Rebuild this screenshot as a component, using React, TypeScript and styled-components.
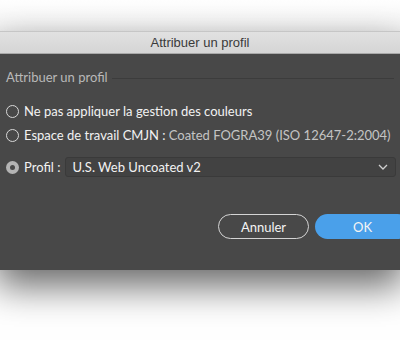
import React from "react";
import styled, { createGlobalStyle } from "styled-components";

const GlobalStyle = createGlobalStyle`
  html, body {
    margin: 0;
    padding: 0;
    background: #ffffff;
    overflow: hidden;
  }
  body {
    width: 400px;
    height: 350px;
  }
`;

const Page = styled.div`
  width: 400px;
  height: 350px;
  display: flex;
  flex-direction: column;
  background: linear-gradient(#ffffff 0px, #f4f4f4 31px, #ffffff 31px);
  overflow: hidden;
`;

const Dialog = styled.div`
  margin-top: 31px;
  margin-left: -4px;
  width: 408px;
  display: flex;
  flex-direction: column;
  box-shadow: 0 16px 36px rgba(0, 0, 0, 0.6);
`;

const TitleBar = styled.div`
  height: 21px;
  border-top: 1px solid #c6c6c6;
  border-bottom: 1px solid #a9a9a9;
  background: linear-gradient(#e1e1e1, #d5d5d5);
  display: flex;
  align-items: center;
  justify-content: center;
  font-family: "Liberation Sans", Arial, sans-serif;
  font-size: 13px;
  color: #3a3a3a;
`;

const Body = styled.div`
  height: 216px;
  box-sizing: border-box;
  background: #484848;
  padding: 15px 10px 0 10px;
  display: flex;
  flex-direction: column;
  font-family: Lato, "Open Sans", sans-serif;
  font-size: 13px;
`;

const GroupHeader = styled.div`
  display: flex;
  align-items: center;
  gap: 4px;
  color: #b9b9b9;
  font-size: 13px;
  height: 16px;
`;

const GroupLine = styled.div`
  flex: 1;
  height: 1px;
  background: #3c3c3c;
  margin-top: 2px;
`;

const Options = styled.div`
  display: flex;
  flex-direction: column;
  margin-top: 14px;
`;

const Row = styled.div<{ $h: number }>`
  display: flex;
  align-items: center;
  height: ${(p) => p.$h}px;
  gap: 5px;
  color: #f2f2f2;
`;

const Radio = styled.span<{ $checked?: boolean }>`
  width: 13px;
  height: 13px;
  box-sizing: border-box;
  border-radius: 50%;
  flex-shrink: 0;
  border: ${(p) => (p.$checked ? "none" : "1px solid #d8d8d8")};
  background: ${(p) => (p.$checked ? "#b4b4b4" : "transparent")};
  display: flex;
  align-items: center;
  justify-content: center;
  &::after {
    content: "";
    display: ${(p) => (p.$checked ? "block" : "none")};
    width: 5px;
    height: 5px;
    border-radius: 50%;
    background: #4a4a4a;
  }
`;

const Label = styled.span`
  white-space: nowrap;
`;

const Muted = styled.span`
  color: #c4c4c4;
  white-space: nowrap;
`;

const Select = styled.div`
  flex: 1;
  height: 20px;
  margin-right: -2px;
  box-sizing: border-box;
  border: 1px solid #3a3a3a;
  border-radius: 3px;
  background: #424242;
  display: flex;
  align-items: center;
  justify-content: space-between;
  padding: 0 7px 0 6px;
  color: #f2f2f2;
`;

const Buttons = styled.div`
  display: flex;
  justify-content: flex-end;
  gap: 6px;
  margin-top: 27px;
  margin-right: -16px;
`;

const Button = styled.div<{ $primary?: boolean }>`
  width: ${(p) => (p.$primary ? "95px" : "91px")};
  height: 25px;
  box-sizing: border-box;
  border-radius: 13px;
  display: flex;
  align-items: center;
  justify-content: center;
  color: #f4f4f4;
  font-size: 13px;
  border: ${(p) => (p.$primary ? "none" : "1px solid #d4d4d4")};
  background: ${(p) => (p.$primary ? "#4aa0ea" : "transparent")};
`;

export default function App() {
  return (
    <>
      <GlobalStyle />
      <Page>
        <Dialog>
          <TitleBar>Attribuer un profil</TitleBar>
          <Body>
            <GroupHeader>
              Attribuer un profil
              <GroupLine />
            </GroupHeader>
            <Options>
              <Row $h={24}>
                <Radio />
                <Label>Ne pas appliquer la gestion des couleurs</Label>
              </Row>
              <Row $h={24}>
                <Radio />
                <Label>
                  Espace de travail CMJN : <Muted>Coated FOGRA39 (ISO 12647-2:2004)</Muted>
                </Label>
              </Row>
              <Row $h={40}>
                <Radio $checked />
                <Label>Profil :</Label>
                <Select>
                  <span>U.S. Web Uncoated v2</span>
                  <svg width="10" height="6" viewBox="0 0 10 6">
                    <path d="M1 1 L5 5 L9 1" stroke="#d0d0d0" strokeWidth="1.3" fill="none" />
                  </svg>
                </Select>
              </Row>
            </Options>
            <Buttons>
              <Button>Annuler</Button>
              <Button $primary>OK</Button>
            </Buttons>
          </Body>
        </Dialog>
      </Page>
    </>
  );
}
